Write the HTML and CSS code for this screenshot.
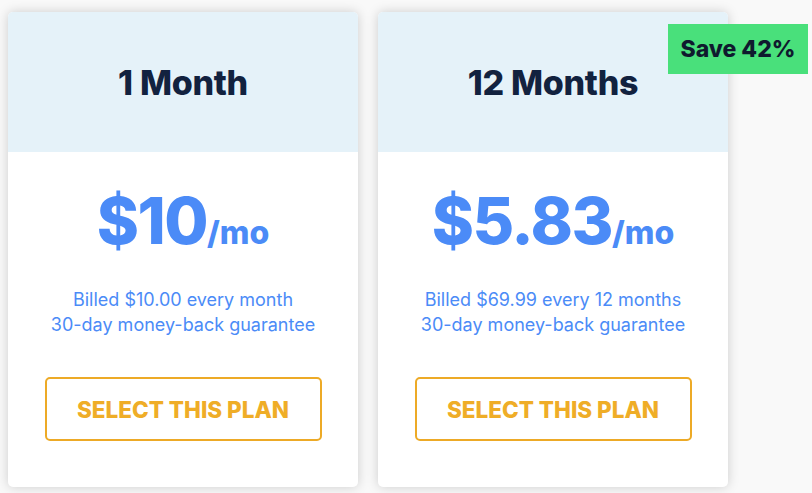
FILE: index.html
```html
<!DOCTYPE html>
<html>
<head>
<meta charset="utf-8">
<link rel="stylesheet" href="styles.css">
</head>
<body>
<div class="plans">
  <div class="card">
    <div class="card-head"><h2 class="title">1 Month</h2></div>
    <div class="card-body">
      <div class="price"><span class="amount">$10</span><span class="per">/mo</span></div>
      <p class="billing">Billed $10.00 every month<br>30-day money-back guarantee</p>
      <button class="select">SELECT THIS PLAN</button>
    </div>
  </div>
  <div class="card">
    <div class="card-head"><h2 class="title">12 Months</h2></div>
    <div class="card-body">
      <div class="price"><span class="amount">$5.83</span><span class="per">/mo</span></div>
      <p class="billing">Billed $69.99 every 12 months<br>30-day money-back guarantee</p>
      <button class="select">SELECT THIS PLAN</button>
    </div>
    <div class="badge">Save 42%</div>
  </div>
</div>
</body>
</html>
```
FILE: styles.css
```css
html, body {
  margin: 0;
  padding: 0;
  background: #f9f9f9;
  font-family: Inter, "Liberation Sans", sans-serif;
}
.plans {
  display: flex;
  gap: 20px;
  padding: 12px 8px;
}
.card {
  position: relative;
  width: 350px;
  height: 475px;
  background: #fff;
  border-radius: 5px;
  box-shadow: 0 0 12px rgba(0, 0, 0, 0.18);
  display: flex;
  flex-direction: column;
}
.card-head {
  height: 140px;
  background: #e5f2f9;
  border-radius: 5px 5px 0 0;
  display: flex;
  align-items: center;
  justify-content: center;
}
.title {
  margin: 0;
  font-size: 34px;
  font-weight: 800;
  color: #12223f;
  letter-spacing: -0.3px;
}
.card-body {
  display: flex;
  flex-direction: column;
  align-items: center;
  padding-top: 37px;
}
.price {
  color: #4b8bf7;
  font-weight: 800;
  line-height: 1;
}
.amount {
  font-size: 64px;
  letter-spacing: -1.5px;
}
.per {
  font-size: 32px;
}
.billing {
  margin: 34px 0 0;
  text-align: center;
  color: #4b8bf7;
  font-size: 18px;
  line-height: 25px;
}
.select {
  margin-top: 40px;
  width: 277px;
  height: 64px;
  background: #fff;
  border: 2px solid #edaa26;
  border-radius: 5px;
  color: #efad27;
  font-family: inherit;
  font-size: 22.5px;
  font-weight: 800;
}
.badge {
  position: absolute;
  top: 12px;
  right: -80px;
  width: 140px;
  height: 50px;
  background: #49e07b;
  color: #0f1a2e;
  font-size: 23px;
  font-weight: 800;
  display: flex;
  align-items: center;
  justify-content: center;
}
```
